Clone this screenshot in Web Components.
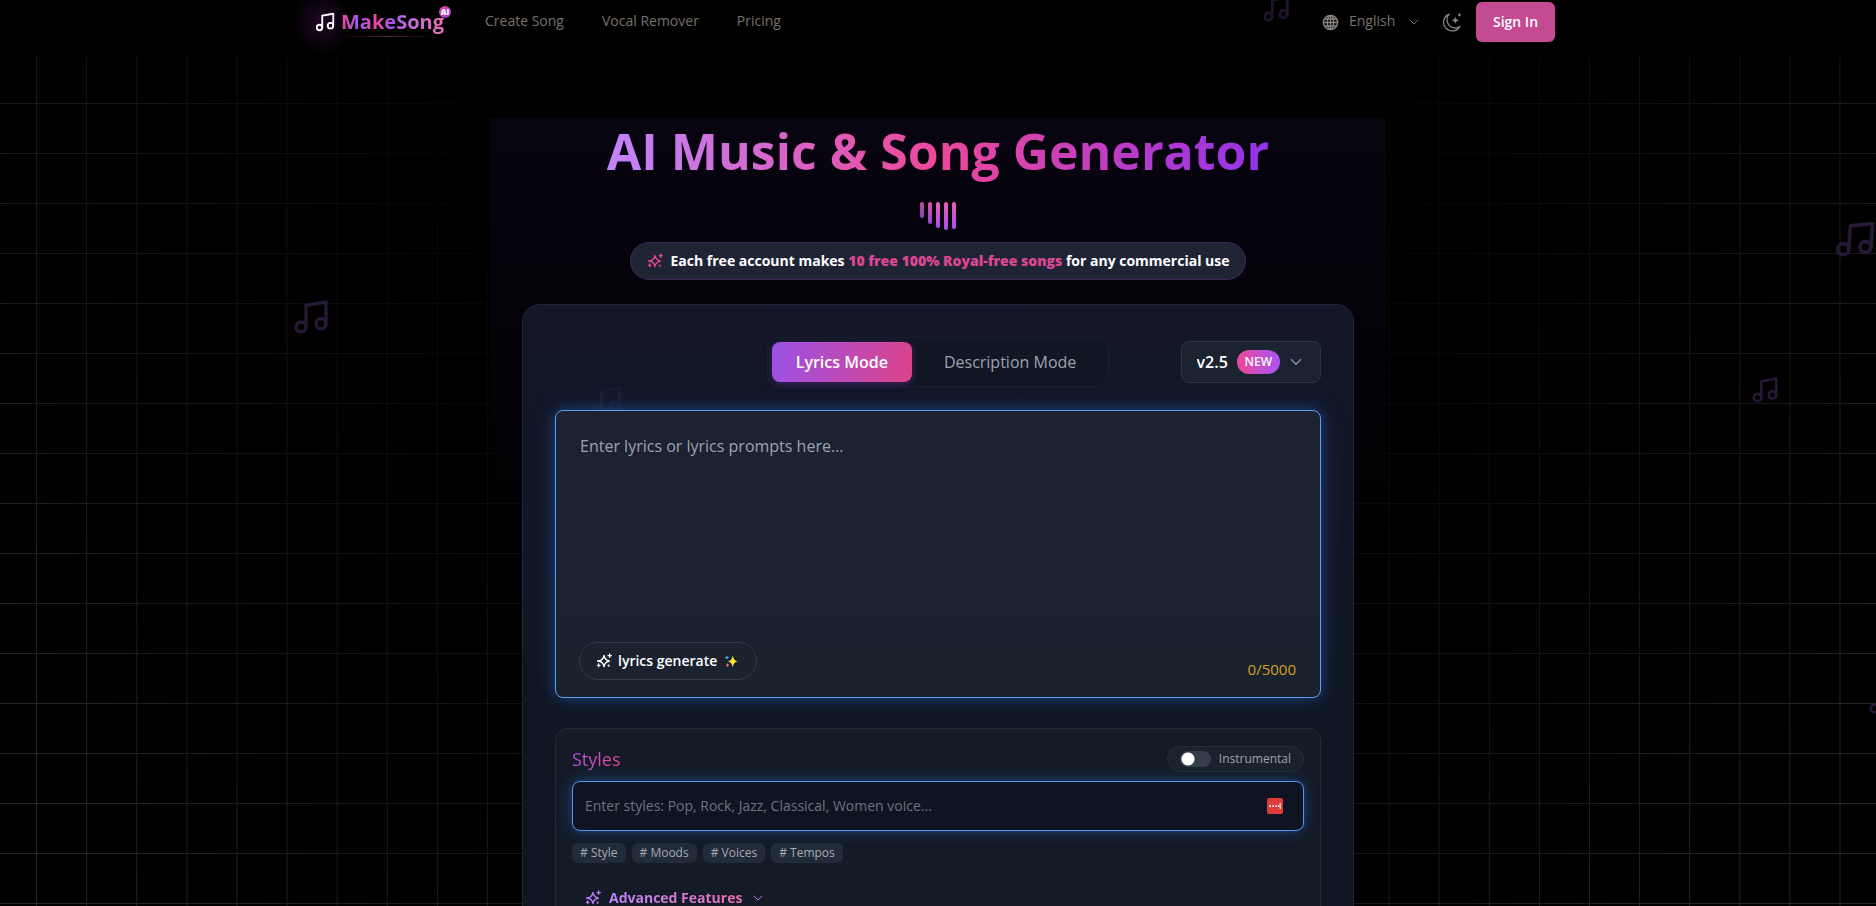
<!DOCTYPE html>
<html lang="en">
<head>
<meta charset="utf-8">
<meta name="viewport" content="width=device-width, initial-scale=1">
<title>AI Music &amp; Song Generator</title>
<style>
  html, body { margin: 0; height: 100%; background: #000; }
  body { font-family: "Open Sans", "Noto Sans", sans-serif; font-size: 14px; color: #fff; overflow: hidden; }
</style>
</head>
<body>
<song-app></song-app>

<script>
const ICONS = {
  music: '<path d="M9 18V5l12-2v13"/><circle cx="6" cy="18" r="3"/><circle cx="18" cy="16" r="3"/>',
  chevron: '<path d="m4 8 8 8 8-8"/>',
  globe: '<circle cx="12" cy="12" r="10"/><ellipse cx="12" cy="12" rx="4.500" ry="10"/><path d="M12 2v20M2 12h20M3.500 7h17M3.500 17h17"/>',
  moon: '<path d="M8.500 2.500A10.500 10.500 0 1 0 21.500 17.500 10 10 0 0 1 8.500 2.500Z"/><path fill="currentColor" stroke="none" d="M16 5.500q.6 3.900 4.500 4.500-3.900.6-4.500 4.500-.6-3.900-4.500-4.500 3.900-.6 4.500-4.500ZM21 1q.3 2.200 2.500 2.500Q21.300 3.800 21 6q-.3-2.200-2.500-2.500Q20.700 3.200 21 1Z"/>',
  sparkles: '<path d="M12 3.500c.7 5.400 2.600 7.300 8 8.500-5.400 1.200-7.300 3.100-8 8.500-.7-5.400-2.600-7.300-8-8.500 5.400-1.200 7.300-3.100 8-8.500Z"/><path d="M20.500 1.500v5M18 4h5M4 16.500v4M2 18.500h4"/><circle cx="3" cy="12" r=".6"/><circle cx="19" cy="19" r=".6"/>',
  glitter: '<g stroke="none"><path fill="#ffe72e" d="M15 2q1.200 9 8.500 10.500Q16.200 14 15 23q-1.200-9-8.500-10.500Q13.800 11 15 2Z"/><path fill="#35c3e8" d="M5 2.500q.6 3 4 3.500-3.400.5-4 3.500-.6-3-4-3.500 3.400-.5 4-3.500Z"/><path fill="#f4708e" d="M6 15.500q.6 3 3.500 3.500Q6.600 19.500 6 22.500 5.400 19.500 2.500 19 5.400 18.500 6 15.500Z"/></g>',
  more: '<rect width="24" height="24" rx="3" fill="#dc3c3a" stroke="none"/><g fill="#fff" stroke="none"><rect x="3.500" y="11" width="2.500" height="2.500"/><rect x="8" y="11" width="2.500" height="2.500"/><rect x="12.500" y="11" width="2.500" height="2.500"/><rect x="16.500" y="11" width="2" height="2.500"/><rect x="19" y="7.500" width="1.500" height="9"/></g>'
};

function define(name, html, setup) {
  const template = document.createElement('template');
  template.innerHTML = html;
  customElements.define(name, class extends HTMLElement {
    connectedCallback() {
      if (this.shadowRoot) return;
      const root = this.attachShadow({ mode: 'open' });
      root.append(template.content.cloneNode(true));
      if (setup) setup(this, root);
    }
  });
}

define('song-icon', `
<style>
  :host { display: block; flex: none; width: var(--size, 16px); height: var(--size, 16px); }
  svg { display: block; width: 100%; height: 100%; fill: none; stroke: currentColor; stroke-linecap: round; stroke-linejoin: round; overflow: visible; }
</style>
<svg viewBox="0 0 24 24" aria-hidden="true"></svg>`,
(host, root) => {
  const svg = root.querySelector('svg');
  svg.setAttribute('stroke-width', host.getAttribute('weight') || '2');
  svg.innerHTML = ICONS[host.getAttribute('name')];
});

define('song-backdrop', `
<style>
  :host { display: block; position: absolute; inset: 0; overflow: hidden; pointer-events: none; }
  .grid {
    position: absolute; inset: 3px -14px 0;
    background-image: linear-gradient(90deg, #262626 1px, transparent 1px), linear-gradient(#262626 1px, transparent 1px);
    background-size: 50px 50px; background-repeat: round repeat;
    -webkit-mask-image: radial-gradient(ellipse 60% 130% at 50% 10%, transparent 34%, #000 100%);
    mask-image: radial-gradient(ellipse 60% 130% at 50% 10%, transparent 34%, #000 100%);
  }
  song-icon { position: absolute; color: #271836; }
</style>
<div class="grid"></div>
<song-icon name="music" style="--size:40px; left:15.5%; top:297px"></song-icon>
<song-icon name="music" style="--size:44px; left:97.7%; top:217px; rotate:4deg"></song-icon>
<song-icon name="music" style="--size:30px; left:93.3%; top:375px"></song-icon>
<song-icon name="music" style="--size:30px; left:99.5%; top:686px"></song-icon>`);

define('song-brand', `
<style>
  :host { display: block; }
  a { position: relative; display: flex; align-items: center; gap: 5px; color: #fff; text-decoration: none; }
  a::before { content: ""; position: absolute; left: -22px; top: -18px; width: 60px; height: 66px; background: radial-gradient(closest-side, #200926, transparent); }
  a::after { content: ""; position: absolute; left: 26px; right: 8px; bottom: 0; height: 1px; background: linear-gradient(90deg, transparent, #5a2433, transparent); }
  song-icon { position: relative; --size: 22px; }
  .name { position: relative; font-size: 20px; line-height: 30px; font-weight: 700; background: linear-gradient(90deg, #ec4899, #a855f7 18%, #ec4899 34%, #a855f7 50%, #c070dc 65%, #d66fc0 85%, #ec6fb0); -webkit-background-clip: text; background-clip: text; color: transparent; }
  .badge { position: absolute; right: -7px; top: -1px; width: 12px; height: 12px; border-radius: 50%; background: linear-gradient(135deg, #ec4899, #9333ea); font-size: 8px; line-height: 12px; font-weight: 800; text-align: center; }
</style>
<a href="#"><song-icon name="music"></song-icon><span class="name">MakeSong</span><span class="badge">AI</span></a>`);

define('song-header', `
<style>
  :host { display: block; position: relative; background: #000; height: 57px; flex: none; }
  .bar { box-sizing: border-box; max-width: 1280px; height: 44px; margin: 0 auto; padding: 0 23px 0 16px; display: flex; align-items: center; }
  nav { display: flex; gap: 38px; margin-left: 41px; padding-bottom: 2px; flex: 1; }
  a, select { color: #78716c; text-decoration: none; font: 14px/24px "Open Sans", sans-serif; }
  .lang { display: flex; align-items: center; color: #78716c; }
  .lang > :first-child { color: #8a8580; --size: 17px; }
  select { appearance: none; border: 0; padding: 0 0 2px; margin: 0 12px 0 10px; background: none; }
  .lang > :last-child { --size: 12px; }
  .theme { margin: 0 14px 0 22px; padding: 0; border: 0; background: none; color: #8a8580; --size: 20px; }
  .sign { width: 79px; height: 40px; padding: 0; border: 0; border-radius: 6px; background: #c44a92; color: #fff; font: 600 14px/20px "Open Sans", sans-serif; }
  .note { position: absolute; left: 67.2%; top: -6px; color: #22152f; --size: 30px; }
</style>
<song-icon class="note" name="music"></song-icon>
<div class="bar">
  <song-brand></song-brand>
  <nav aria-label="Main"><a href="#create">Create Song</a><a href="#vocal">Vocal Remover</a><a href="#pricing">Pricing</a></nav>
  <div class="lang"><song-icon name="globe"></song-icon><select aria-label="Language"><option>English</option></select><song-icon name="chevron"></song-icon></div>
  <button class="theme" aria-label="Switch theme"><song-icon name="moon" weight="1.5"></song-icon></button>
  <button class="sign">Sign In</button>
</div>`);

define('song-hero', `
<style>
  :host { display: flex; flex-direction: column; align-items: center; }
  h1 { margin: 0; font-size: 50px; line-height: 66px; font-weight: 700; white-space: nowrap; background: linear-gradient(90deg, #c084fc, #ec4899 50%, #9333ea); -webkit-background-clip: text; background-clip: text; color: transparent; }
  .bars { display: flex; gap: 4px; height: 28px; margin: 18px 0 12px; }
  .bars i { width: 4px; border-radius: 2px; background: linear-gradient(#ec5fae, #a94df0); }
  .bars i:nth-child(1) { height: 16px; opacity: .8; }
  .bars i:nth-child(2) { height: 22px; opacity: .9; }
  .bars i:nth-child(3) { height: 26px; }
  .bars i:nth-child(4) { height: 28px; }
  .bars i:nth-child(5) { height: 27px; }
  p { display: flex; align-items: center; gap: 8px; margin: 0; padding: 0 16px; height: 36px; border: 1px solid #3c2958; border-radius: 19px; background: #1f2435; font-size: 14px; line-height: 20px; font-weight: 700; white-space: nowrap; }
  b, p song-icon { color: #db4793; }
</style>
<h1>AI Music &amp; Song Generator</h1>
<div class="bars" aria-hidden="true"><i></i><i></i><i></i><i></i><i></i></div>
<p><song-icon name="sparkles"></song-icon><span>Each free account makes <b>10 free 100% Royal-free songs</b> for any commercial use</span></p>`);

define('mode-bar', `
<style>
  :host { display: grid; grid-template-columns: 1fr auto 1fr; align-items: center; }
  .tabs { grid-column: 2; display: flex; padding: 4px; border: 1px solid #1a2030; border-radius: 12px; background: #111625; }
  .tabs button { height: 40px; padding: 0 24px; border: 0; border-radius: 8px; background: none; color: #9ca3af; font: 16px/24px "Open Sans", sans-serif; }
  .tabs button[aria-selected=true] { background: linear-gradient(100deg, #9b51e6, #db4289); color: #fff; font-weight: 600; box-shadow: 0 2px 6px #6d2fa080; }
  .tabs button + button { padding: 0 28px 0 32px; }
  .version { justify-self: end; box-sizing: border-box; height: 42px; display: flex; align-items: center; padding: 0 17px 0 15px; border: 1px solid #2b3442; border-radius: 8px; background: #1b2331; color: #9ca3af; --size: 14px; }
  select { appearance: none; border: 0; padding: 0; margin: 0 8px 0 0; background: none; color: #fff; font: 600 16px/24px "Open Sans", sans-serif; }
  .new { height: 24px; padding: 0 8px; margin-right: 9px; border-radius: 12px; background: linear-gradient(90deg, #ec4899, #a855f7); color: #fff; font-size: 12px; line-height: 24px; font-weight: 600; }
</style>
<div class="tabs" role="tablist"><button role="tab" aria-selected="true">Lyrics Mode</button><button role="tab" aria-selected="false">Description Mode</button></div>
<div class="version"><select aria-label="Model version"><option>v2.5</option></select><span class="new">NEW</span><song-icon name="chevron"></song-icon></div>`);

define('lyrics-editor', `
<style>
  :host { display: grid; box-sizing: border-box; height: 288px; border: 1px solid #5aa0f8; border-radius: 8px; background: linear-gradient(#1c2233, #1a222e); box-shadow: 0 0 24px #2f7cf040, 0 0 12px #2f7cf040; }
  textarea { grid-area: 1 / 1; min-width: 0; resize: none; border: 0; outline: 0; margin: 0; padding: 22px 24px; background: none; color: #fff; font: 16px/26px "Open Sans", sans-serif; }
  textarea::placeholder { color: #9ca3af; opacity: 1; }
  .foot { grid-area: 1 / 1; align-self: end; display: flex; justify-content: space-between; align-items: center; padding: 0 24px 17px 23px; }
  button { display: flex; align-items: center; height: 38px; padding: 0 18px 0 16px; border: 1px solid #323a48; border-radius: 19px; background: none; color: #fff; font: 600 14px/20px "Open Sans", sans-serif; }
  button span { margin: 0 7px 0 6px; }
  button > :last-child { --size: 14px; }
  output { color: #d5a021; font-size: 15px; line-height: 20px; margin-top: 16px; }
</style>
<textarea aria-label="Lyrics" placeholder="Enter lyrics or lyrics prompts here..."></textarea>
<div class="foot"><button><song-icon name="sparkles"></song-icon><span>lyrics generate</span><song-icon name="glitter"></song-icon></button><output>0/5000</output></div>`);

define('style-chip', `
<style>
  :host { display: block; }
  button { display: block; height: 20px; padding: 0 8px; border: 0; border-radius: 6px; background: #222b39; color: #a3aab6; font: 12px/20px "Open Sans", sans-serif; }
</style>
<button># <slot></slot></button>`);

define('styles-panel', `
<style>
  :host { display: block; box-sizing: border-box; border: 1px solid #232b38; border-radius: 12px; background: #141b27; padding: 16px; }
  .head { display: flex; justify-content: space-between; align-items: center; margin: 1px 0 9px; }
  h2 { margin: 0; font-size: 18px; line-height: 26px; font-weight: 400; background: linear-gradient(90deg, #b350e8, #e0468f); -webkit-background-clip: text; background-clip: text; color: transparent; }
  label { box-sizing: border-box; height: 26px; display: flex; align-items: center; gap: 8px; padding: 0 12px; border: 1px solid #252e3c; border-radius: 13px; background: #1a222e; color: #9ca3af; font-size: 12px; line-height: 18px; }
  label input { appearance: none; margin: 0; width: 31px; height: 16px; border-radius: 8px; background: radial-gradient(circle at 8px 8px, #fff 6px, #343d4c 7px); }
  .field { display: flex; align-items: center; height: 48px; padding: 0 20px 0 12px; border: 1px solid #5a93e8; border-radius: 8px; background: #0f1423; box-shadow: 0 0 16px #2f7cf04d, 0 0 6px #2f7cf040; }
  .field input { flex: 1; min-width: 0; padding: 0; border: 0; outline: 0; background: none; color: #fff; font: 14px/20px "Open Sans", sans-serif; }
  .field input::placeholder { color: #6b7280; opacity: 1; }
  .chips { display: flex; gap: 6px; margin: 12px 0 25px; }
  .more { display: flex; align-items: center; padding: 0; margin-left: 13px; border: 0; background: none; color: #b57bf2; font: 700 14px/20px "Open Sans", sans-serif; }
  .more span { margin: 0 10px 0 8px; background: linear-gradient(90deg, #c084fc, #ec6fb0); -webkit-background-clip: text; background-clip: text; color: transparent; }
  .more > :last-child { --size: 12px; }
</style>
<div class="head"><h2>Styles</h2><label><input type="checkbox" role="switch">Instrumental</label></div>
<div class="field"><input type="text" aria-label="Styles" placeholder="Enter styles: Pop, Rock, Jazz, Classical, Women voice..."><song-icon name="more"></song-icon></div>
<div class="chips"><style-chip>Style</style-chip><style-chip>Moods</style-chip><style-chip>Voices</style-chip><style-chip>Tempos</style-chip></div>
<button class="more" aria-expanded="false"><song-icon name="sparkles"></song-icon><span>Advanced Features</span><song-icon name="chevron"></song-icon></button>`);

define('song-card', `
<style>
  :host { display: flex; flex-direction: column; position: relative; border: 1px solid #20273a; border-radius: 18px; background: linear-gradient(#131729, #0f1623 400px); padding: 32px; }
  .note { position: absolute; left: 65px; top: 78px; color: #171d30; --size: 36px; }
  mode-bar { margin-bottom: 23px; }
  lyrics-editor { margin-bottom: 30px; position: relative; }
</style>
<song-icon class="note" name="music"></song-icon>
<mode-bar></mode-bar>
<lyrics-editor></lyrics-editor>
<styles-panel></styles-panel>`);

define('song-app', `
<style>
  :host { display: block; position: relative; height: 100vh; overflow: hidden auto; scrollbar-width: none; background: #000; }
  main { position: relative; box-sizing: border-box; max-width: 896px; margin: 61px auto 0; padding: 0 32px 32px; background: linear-gradient(#080410, #050209 200px, transparent 440px); }
  song-card { margin-top: 24px; }
</style>
<song-backdrop></song-backdrop>
<song-header></song-header>
<main>
  <song-hero></song-hero>
  <song-card></song-card>
</main>`);
</script>
</body>
</html>
